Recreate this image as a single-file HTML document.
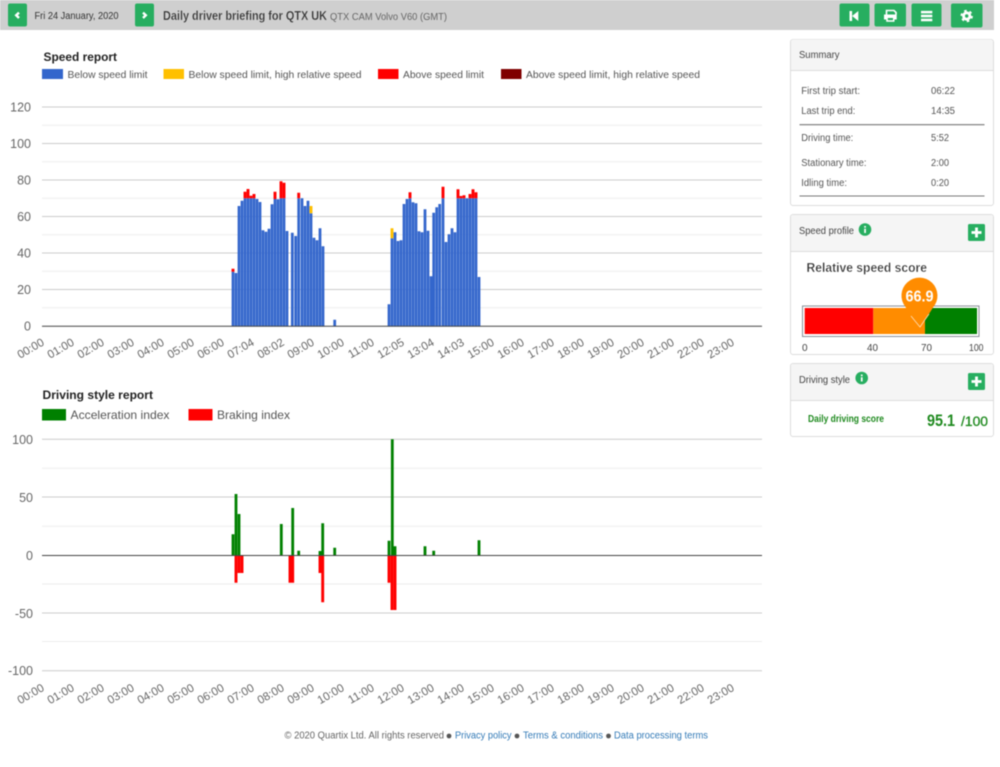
<!DOCTYPE html>
<html><head><meta charset="utf-8"><title>Daily driver briefing</title>
<style>
html,body{margin:0;padding:0;background:#fff;width:1000px;height:767px;overflow:hidden}
svg{display:block;filter:blur(.5px)}
text{font-family:"Liberation Sans",sans-serif;fill:#555}
.ax{font-size:12.5px;fill:#666}
.t{font-size:11.5px;fill:#666}
.s{font-size:10px;fill:#555}
.h{font-size:10px;fill:#444}
</style></head><body>
<svg width="1000" height="767" viewBox="0 0 1000 767" xmlns="http://www.w3.org/2000/svg">
<!-- header -->
<rect x="0" y="0" width="994" height="30" fill="#cfcfcf"/>
<g fill="#27ae60">
<rect x="8" y="3.5" width="19" height="23" rx="2"/>
<rect x="135" y="3.5" width="19" height="23" rx="2"/>
<rect x="839.5" y="3.5" width="30" height="23" rx="2"/>
<rect x="874.5" y="3.5" width="31.5" height="23" rx="2"/>
<rect x="911.5" y="3.5" width="30" height="23" rx="2"/>
<rect x="951" y="3.5" width="31.5" height="24" rx="2"/>
</g>
<path d="M19 12.6L16.2 15.3l2.8 2.7" fill="none" stroke="#fff" stroke-width="2.4"/>
<path d="M143 12.6L145.8 15.3l-2.8 2.7" fill="none" stroke="#fff" stroke-width="2.4"/>
<path d="M849.5 11h2.6v10h-2.6zM858.3 11v10l-6.2-5z" fill="#fff"/>
<path d="M886.5 14.5V10.5h7.5l2 2v2" fill="none" stroke="#fff" stroke-width="1.6"/>
<path d="M884 14.5h12.7v5h-2.2v2.3h-8.3v-2.3H884z" fill="#fff"/>
<rect x="887.8" y="18" width="5.2" height="2.2" fill="#27ae60"/>
<path d="M921 12.1h11.3M921 16h11.3M921 20h11.3" stroke="#fff" stroke-width="2.5"/>
<circle cx="966.7" cy="16" r="4.6" fill="#fff"/>
<circle cx="966.7" cy="16" r="5.3" fill="none" stroke="#fff" stroke-width="1.8" stroke-dasharray="2.6 2.95"/>
<circle cx="966.7" cy="16" r="1.7" fill="#27ae60"/>
<text x="34.5" y="19" font-size="10" textLength="84" lengthAdjust="spacingAndGlyphs" style="fill:#333">Fri 24 January, 2020</text>
<text x="163" y="20" font-size="13" textLength="164" lengthAdjust="spacingAndGlyphs" style="fill:#333;font-weight:bold;stroke:#cfcfcf;stroke-width:.25">Daily driver briefing for QTX UK</text>
<text x="330" y="20" font-size="10" textLength="117" lengthAdjust="spacingAndGlyphs" style="fill:#666">QTX CAM Volvo V60 (GMT)</text>

<!-- speed chart -->
<text x="43.5" y="61" font-size="12" font-weight="bold" textLength="73.5" lengthAdjust="spacingAndGlyphs" style="fill:#222">Speed report</text>
<rect x="42" y="69" width="21" height="10" fill="#3366cc"/>
<text x="67.5" y="78" font-size="10.5" textLength="80" lengthAdjust="spacingAndGlyphs">Below speed limit</text>
<rect x="163.5" y="69" width="20.5" height="10" fill="#ffc000"/>
<text x="188.5" y="78" font-size="10.5" textLength="173" lengthAdjust="spacingAndGlyphs">Below speed limit, high relative speed</text>
<rect x="378" y="69" width="20.5" height="10" fill="#ff0000"/>
<text x="403" y="78" font-size="10.5" textLength="81" lengthAdjust="spacingAndGlyphs">Above speed limit</text>
<rect x="501" y="69" width="20.5" height="10" fill="#800000"/>
<text x="526" y="78" font-size="10.5" textLength="174" lengthAdjust="spacingAndGlyphs">Above speed limit, high relative speed</text>

<path d="M42 125.3H762M42 161.8H762M42 198.3H762M42 234.8H762M42 271.3H762M42 307.8H762" stroke="#ededed" stroke-width="1"/>
<path d="M42 107H762M42 143.5H762M42 180H762M42 216.5H762M42 253H762M42 289.5H762" stroke="#cccccc" stroke-width="1"/>
<path fill="none" stroke="#3366cc" stroke-width="2.75" d="M233 326V271.7M236 326V273M239 326V206M242 326V200.7M245 326V198.3M248 326V198.3M251 326V198.3M254 326V198.3M257 326V199M260 326V202M263 326V230.3M266 326V231.7M269 326V228.7M272 326V204.3M275 326V199M278 326V199.3M281 326V198.3M284 326V198.3M287 326V231M292.3 326V232.7M295.7 326V236M298.7 326V198.3M302 326V198.3M305 326V206M308 326V200.7M311 326V213.3M314 326V237.7M317 326V240.3M320 326V228.3M323 326V246.3M334.7 326V319.7M389 326V304.3M392 326V238.3M395 326V232.3M398 326V241M401 326V240.3M404 326V204M407 326V199M410 326V198.3M413 326V202.3M416 326V203.3M419 326V231.3M422 326V232.3M425 326V209.3M428 326V230.7M431 326V276.3M433.7 326V212.7M436.7 326V207.3M439.7 326V204M443 326V198.3M446 326V242M449 326V234.3M452 326V228.3M455 326V232.3M458 326V198.3M461 326V198.3M464 326V198.3M467 326V198.3M470 326V198.3M473 326V198.3M476 326V198.3M479 326V277"/>
<path fill="none" stroke="#ff0000" stroke-width="2.9" d="M233 271.7V268.7M245 198.3V191.7M248 198.3V189M251 198.3V195.7M254 198.3V194M275 199V191.7M281 198.3V181.3M284 198.3V182.7M298.7 198.3V192.7M410 198.3V192.3M443 198.3V186.7M458 198.3V189.3M461 198.3V196M464 198.3V195.3M470 198.3V194M473 198.3V189.3M476 198.3V192.3"/>
<path fill="none" stroke="#ffc000" stroke-width="2.9" d="M311 213.3V206M392 238.3V228.3"/>
<path d="M42 326.3H762" stroke="#444" stroke-width="1"/>

<g text-anchor="end">
<text class="ax" x="31" y="111.5">120</text>
<text class="ax" x="31" y="148">100</text>
<text class="ax" x="31" y="184.5">80</text>
<text class="ax" x="31" y="221">60</text>
<text class="ax" x="31" y="257.5">40</text>
<text class="ax" x="31" y="294">20</text>
<text class="ax" x="31" y="330.5">0</text>
</g>
<g text-anchor="end">
<text class="t" transform="translate(45 344.5) rotate(-30)">00:00</text>
<text class="t" transform="translate(75 344.5) rotate(-30)">01:00</text>
<text class="t" transform="translate(105 344.5) rotate(-30)">02:00</text>
<text class="t" transform="translate(135 344.5) rotate(-30)">03:00</text>
<text class="t" transform="translate(165 344.5) rotate(-30)">04:00</text>
<text class="t" transform="translate(195 344.5) rotate(-30)">05:00</text>
<text class="t" transform="translate(225 344.5) rotate(-30)">06:00</text>
<text class="t" transform="translate(255 344.5) rotate(-30)">07:04</text>
<text class="t" transform="translate(285 344.5) rotate(-30)">08:02</text>
<text class="t" transform="translate(315 344.5) rotate(-30)">09:00</text>
<text class="t" transform="translate(345 344.5) rotate(-30)">10:00</text>
<text class="t" transform="translate(375 344.5) rotate(-30)">11:00</text>
<text class="t" transform="translate(405 344.5) rotate(-30)">12:05</text>
<text class="t" transform="translate(435 344.5) rotate(-30)">13:04</text>
<text class="t" transform="translate(465 344.5) rotate(-30)">14:03</text>
<text class="t" transform="translate(495 344.5) rotate(-30)">15:00</text>
<text class="t" transform="translate(525 344.5) rotate(-30)">16:00</text>
<text class="t" transform="translate(555 344.5) rotate(-30)">17:00</text>
<text class="t" transform="translate(585 344.5) rotate(-30)">18:00</text>
<text class="t" transform="translate(615 344.5) rotate(-30)">19:00</text>
<text class="t" transform="translate(645 344.5) rotate(-30)">20:00</text>
<text class="t" transform="translate(675 344.5) rotate(-30)">21:00</text>
<text class="t" transform="translate(705 344.5) rotate(-30)">22:00</text>
<text class="t" transform="translate(735 344.5) rotate(-30)">23:00</text>
</g>

<!-- driving chart -->
<text x="42.5" y="399" font-size="12" font-weight="bold" textLength="110.5" lengthAdjust="spacingAndGlyphs" style="fill:#222">Driving style report</text>
<rect x="42" y="409" width="24" height="11.5" fill="#008000"/>
<text x="70.5" y="419" font-size="12" textLength="99" lengthAdjust="spacingAndGlyphs">Acceleration index</text>
<rect x="188.5" y="409" width="24" height="11.5" fill="#ff0000"/>
<text x="217" y="419" font-size="12" textLength="73" lengthAdjust="spacingAndGlyphs">Braking index</text>

<path d="M42 468.3H762M42 526.3H762M42 584H762M42 641.5H762" stroke="#ededed" stroke-width="1"/>
<path d="M42 439.3H762M42 497H762M42 613H762M42 670.8H762" stroke="#cccccc" stroke-width="1"/>
<path d="M42 555.5H762" stroke="#444" stroke-width="1"/>
<path fill="none" stroke="#008000" stroke-width="2.8" d="M233 555V534.3M236 555V494M239 555V514M281.3 555V524M292.7 555V508M298.7 555V550.7M320 555V551M322.7 555V523.3M334.7 555V547.7M389 555V540.7M392.3 555V439.3M395 555V546.3M425 555V546.3M433.7 555V550.7M479 555V540.3"/>
<path fill="none" stroke="#ff0000" stroke-width="2.9" d="M236 556V582.7M239 556V573M242 556V573M290 556V582.7M292.7 556V582.7M320 556V573M322.7 556V602.3M389 556V582.7M392 556V610M395 556V610"/>
<text class="ax" x="33" y="444" text-anchor="end">100</text>
<text class="ax" x="33" y="502" text-anchor="end">50</text>
<text class="ax" x="33" y="560" text-anchor="end">0</text>
<text class="ax" x="33" y="618" text-anchor="end">-50</text>
<text class="ax" x="33" y="675" text-anchor="end">-100</text>
<g text-anchor="end">
<text class="t" transform="translate(45 690) rotate(-30)">00:00</text>
<text class="t" transform="translate(75 690) rotate(-30)">01:00</text>
<text class="t" transform="translate(105 690) rotate(-30)">02:00</text>
<text class="t" transform="translate(135 690) rotate(-30)">03:00</text>
<text class="t" transform="translate(165 690) rotate(-30)">04:00</text>
<text class="t" transform="translate(195 690) rotate(-30)">05:00</text>
<text class="t" transform="translate(225 690) rotate(-30)">06:00</text>
<text class="t" transform="translate(255 690) rotate(-30)">07:00</text>
<text class="t" transform="translate(285 690) rotate(-30)">08:00</text>
<text class="t" transform="translate(315 690) rotate(-30)">09:00</text>
<text class="t" transform="translate(345 690) rotate(-30)">10:00</text>
<text class="t" transform="translate(375 690) rotate(-30)">11:00</text>
<text class="t" transform="translate(405 690) rotate(-30)">12:00</text>
<text class="t" transform="translate(435 690) rotate(-30)">13:00</text>
<text class="t" transform="translate(465 690) rotate(-30)">14:00</text>
<text class="t" transform="translate(495 690) rotate(-30)">15:00</text>
<text class="t" transform="translate(525 690) rotate(-30)">16:00</text>
<text class="t" transform="translate(555 690) rotate(-30)">17:00</text>
<text class="t" transform="translate(585 690) rotate(-30)">18:00</text>
<text class="t" transform="translate(615 690) rotate(-30)">19:00</text>
<text class="t" transform="translate(645 690) rotate(-30)">20:00</text>
<text class="t" transform="translate(675 690) rotate(-30)">21:00</text>
<text class="t" transform="translate(705 690) rotate(-30)">22:00</text>
<text class="t" transform="translate(735 690) rotate(-30)">23:00</text>
</g>

<!-- summary panel -->
<rect x="790.5" y="39.5" width="203" height="166" rx="2.5" fill="#fff" stroke="#ddd"/>
<path d="M791 70V42a2.5 2.5 0 0 1 2.5-2.5h197a2.5 2.5 0 0 1 2.5 2.5V70z" fill="#f5f5f5"/>
<path d="M791 70.5H993" stroke="#ddd"/>
<text class="h" x="799" y="58" textLength="40.5" lengthAdjust="spacingAndGlyphs">Summary</text>
<text class="s" x="801.3" y="94" textLength="58.7" lengthAdjust="spacingAndGlyphs">First trip start:</text>
<text class="s" x="931" y="94" textLength="24" lengthAdjust="spacingAndGlyphs">06:22</text>
<text class="s" x="801.3" y="114" textLength="54" lengthAdjust="spacingAndGlyphs">Last trip end:</text>
<text class="s" x="931" y="114" textLength="24" lengthAdjust="spacingAndGlyphs">14:35</text>
<path d="M799.5 124.7H984.5M799.5 196H984.5" stroke="#777" stroke-width="1.1"/>
<text class="s" x="801.3" y="141" textLength="52" lengthAdjust="spacingAndGlyphs">Driving time:</text>
<text class="s" x="931" y="141" textLength="18" lengthAdjust="spacingAndGlyphs">5:52</text>
<text class="s" x="801.3" y="166" textLength="65.2" lengthAdjust="spacingAndGlyphs">Stationary time:</text>
<text class="s" x="931" y="166" textLength="18" lengthAdjust="spacingAndGlyphs">2:00</text>
<text class="s" x="801.3" y="186" textLength="45.7" lengthAdjust="spacingAndGlyphs">Idling time:</text>
<text class="s" x="931" y="186" textLength="18" lengthAdjust="spacingAndGlyphs">0:20</text>

<!-- speed profile -->
<rect x="790.5" y="214.5" width="203" height="140" rx="2.5" fill="#fff" stroke="#ddd"/>
<path d="M791 251V217.5a2.5 2.5 0 0 1 2.5-2.5h197a2.5 2.5 0 0 1 2.5 2.5V251z" fill="#f5f5f5"/>
<path d="M791 251.5H993" stroke="#ddd"/>
<text class="h" x="799" y="234" textLength="55" lengthAdjust="spacingAndGlyphs">Speed profile</text>
<circle cx="865" cy="229.5" r="6.3" fill="#27ae60"/>
<rect x="864.2" y="226" width="1.7" height="1.7" fill="#fff"/><rect x="864.2" y="228.7" width="1.7" height="4.3" fill="#fff"/>
<rect x="968" y="224" width="17" height="17" rx="1.5" fill="#27ae60"/>
<path d="M976.5 227.5v10M971.5 232.5h10" stroke="#fff" stroke-width="2.8"/>
<text x="806.5" y="272" font-size="13" textLength="120.5" lengthAdjust="spacingAndGlyphs" style="fill:#333;font-weight:bold;stroke:#fff;stroke-width:.3">Relative speed score</text>
<rect x="802.5" y="306" width="176.5" height="30.5" fill="#fff" stroke="#8a8f99"/>
<rect x="804.7" y="308" width="68.6" height="26" fill="#ff0000"/>
<rect x="873.3" y="308" width="51.7" height="26" fill="#ff8c00"/>
<rect x="925" y="308" width="52" height="26" fill="#008000"/>
<path d="M905.5 307Q912 317 920 327Q926 319 933 307.5A18 18 0 1 0 905.5 307z" fill="#ff8c00"/>
<path d="M911 316Q915 321 920 327Q924 321 929 314" fill="none" stroke="#ffe0b8" stroke-width=".8"/>
<text x="919.5" y="301.5" text-anchor="middle" font-size="15.5" font-weight="bold" textLength="28" lengthAdjust="spacingAndGlyphs" style="fill:#fff">66.9</text>
<text class="h" x="802" y="351">0</text>
<text class="h" x="867" y="351" textLength="11" lengthAdjust="spacingAndGlyphs">40</text>
<text class="h" x="921" y="351" textLength="11" lengthAdjust="spacingAndGlyphs">70</text>
<text class="h" x="969" y="351" textLength="14.5" lengthAdjust="spacingAndGlyphs">100</text>

<!-- driving style -->
<rect x="790.5" y="363.5" width="203" height="73" rx="2.5" fill="#fff" stroke="#ddd"/>
<path d="M791 400V366.5a2.5 2.5 0 0 1 2.5-2.5h197a2.5 2.5 0 0 1 2.5 2.5V400z" fill="#f5f5f5"/>
<path d="M791 400.5H993" stroke="#ddd"/>
<text class="h" x="799" y="383" textLength="51" lengthAdjust="spacingAndGlyphs">Driving style</text>
<circle cx="861.7" cy="378" r="6.3" fill="#27ae60"/>
<rect x="860.9" y="374.5" width="1.7" height="1.7" fill="#fff"/><rect x="860.9" y="377.2" width="1.7" height="4.3" fill="#fff"/>
<rect x="968" y="373" width="17" height="17" rx="1.5" fill="#27ae60"/>
<path d="M976.5 376.5v10M971.5 381.5h10" stroke="#fff" stroke-width="2.8"/>
<text x="808" y="422" font-size="10" font-weight="bold" textLength="76" lengthAdjust="spacingAndGlyphs" style="fill:#1f8a1f">Daily driving score</text>
<text x="927" y="426" font-size="17" font-weight="bold" textLength="28" lengthAdjust="spacingAndGlyphs" style="fill:#1f8a1f">95.1</text>
<text x="961" y="426" font-size="14" textLength="27" lengthAdjust="spacingAndGlyphs" style="fill:#1f8a1f;stroke:#1f8a1f;stroke-width:.3">/100</text>

<!-- footer -->
<text x="284.5" y="738.5" font-size="10" textLength="159.5" lengthAdjust="spacingAndGlyphs" style="fill:#666">© 2020 Quartix Ltd. All rights reserved</text>
<circle cx="449" cy="736" r="2.4" fill="#555"/>
<text x="455" y="738.5" font-size="10" textLength="56.5" lengthAdjust="spacingAndGlyphs" style="fill:#337ab7">Privacy policy</text>
<circle cx="517" cy="736" r="2.4" fill="#555"/>
<text x="523" y="738.5" font-size="10" textLength="80" lengthAdjust="spacingAndGlyphs" style="fill:#337ab7">Terms &amp; conditions</text>
<circle cx="608.5" cy="736" r="2.4" fill="#555"/>
<text x="614" y="738.5" font-size="10" textLength="94" lengthAdjust="spacingAndGlyphs" style="fill:#337ab7">Data processing terms</text>
</svg>
</body></html>
